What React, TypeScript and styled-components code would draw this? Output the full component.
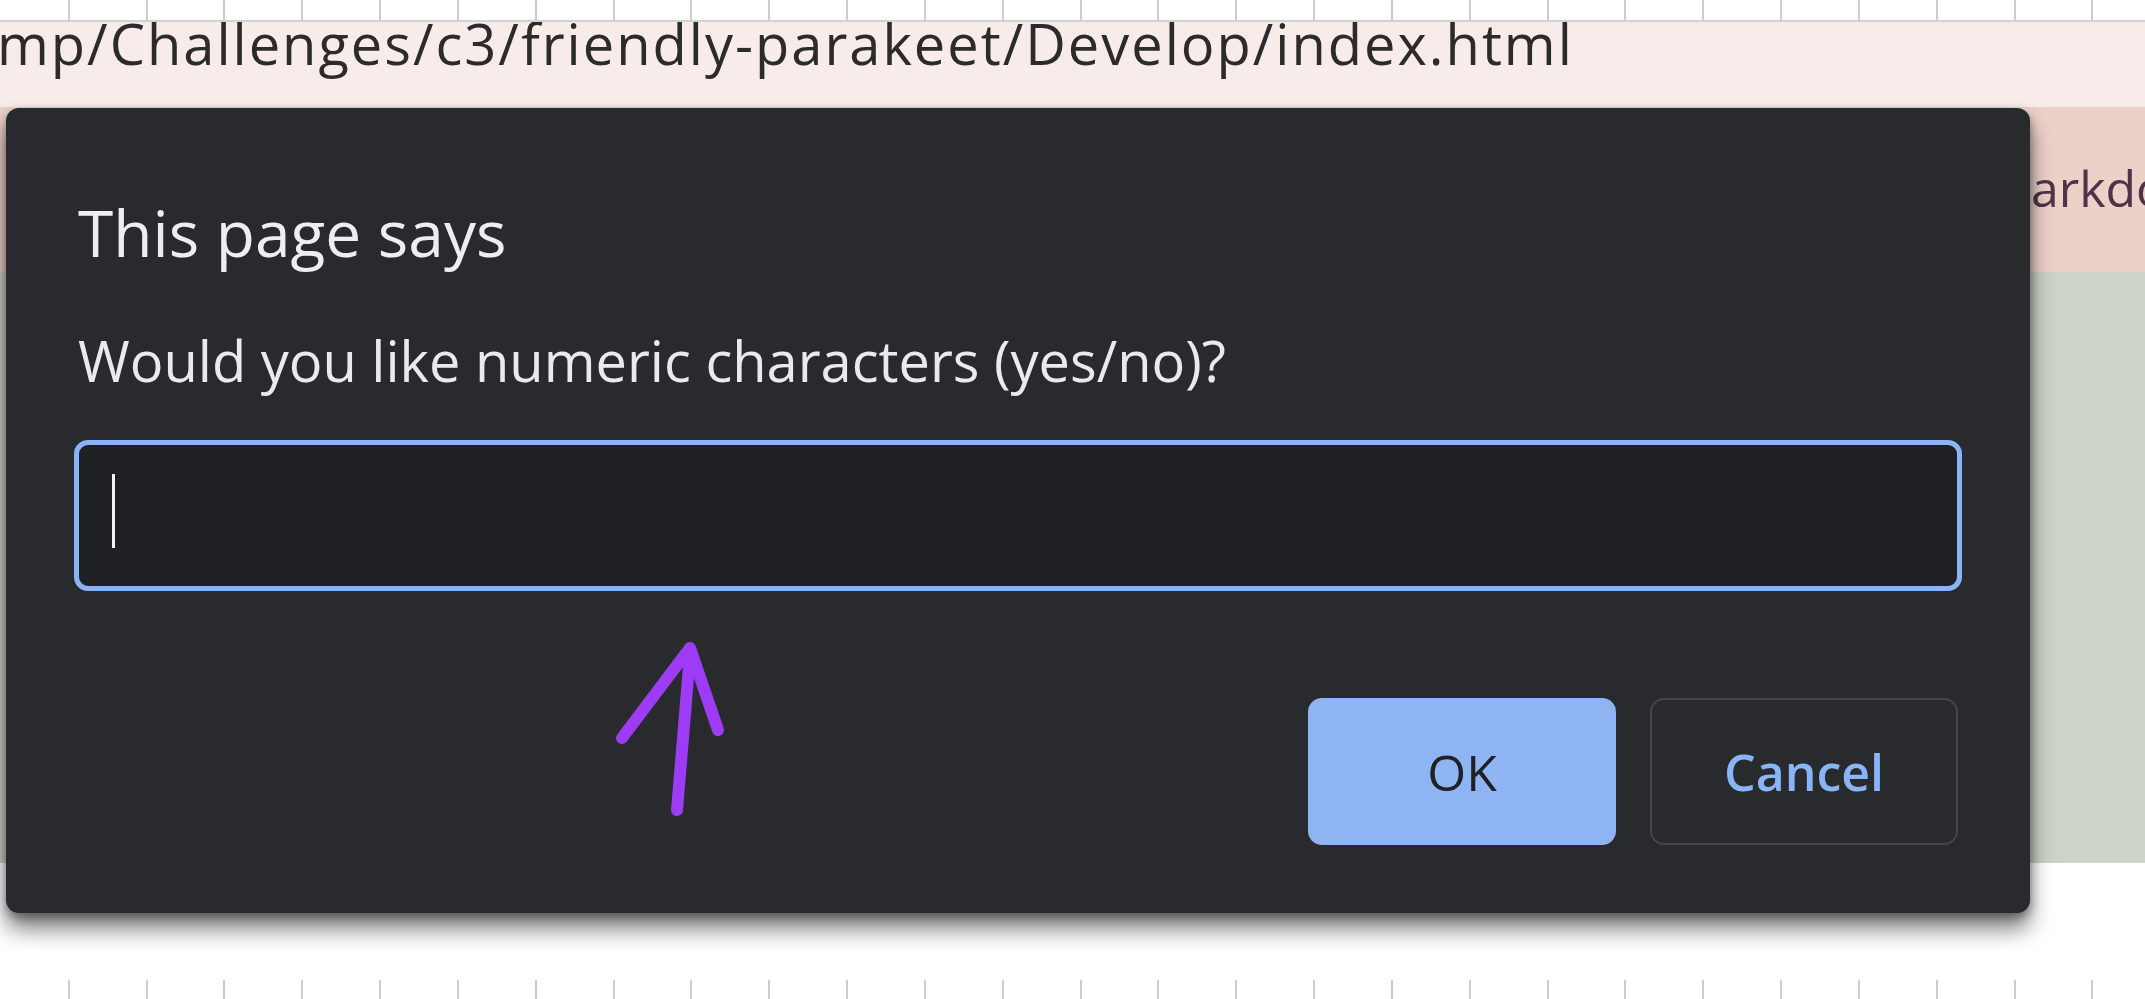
import React from "react";
import styled, { createGlobalStyle } from "styled-components";

const GlobalStyle = createGlobalStyle`
  html, body {
    margin: 0;
    padding: 0;
    width: 2145px;
    height: 999px;
    overflow: hidden;
    background: #ffffff;
  }
  #root {
    width: 2145px;
    height: 999px;
  }
`;

/* graph-paper tick marks: period 77.83px, first line at ~68px */
const TICKS = `repeating-linear-gradient(
  90deg,
  transparent 0px,
  transparent 67.8px,
  #cdcdcd 67.8px,
  #cdcdcd 69.8px,
  transparent 69.8px,
  transparent 77.83px
)`;

const Screen = styled.div`
  position: relative;
  width: 2145px;
  height: 999px;
  display: flex;
  flex-direction: column;
  overflow: hidden;
  font-family: "Open Sans", "Noto Sans", sans-serif;
`;

const Ruler = styled.div<{ $height: number; $line?: boolean }>`
  flex: 0 0 auto;
  height: ${(p) => p.$height}px;
  box-sizing: border-box;
  background: ${TICKS};
  border-bottom: ${(p) => (p.$line ? "2px solid #d2d2d2" : "none")};
`;

const AddressBar = styled.div`
  flex: 0 0 auto;
  height: 85px;
  background: #f8ecea;
  color: #2b2b2b;
  font-size: 56px;
  line-height: 42px;
  letter-spacing: 2px;
  white-space: nowrap;
  overflow: hidden;
  text-indent: -3px;
`;

const PageHeader = styled.header`
  flex: 0 0 auto;
  height: 165px;
  background: #ecd1c9;
  display: grid;
  grid-template-columns: 2031px auto;
  align-items: start;
  padding-top: 56px;
  box-sizing: border-box;
  overflow: hidden;
`;

const HeaderTitle = styled.div`
  font-size: 50px;
  line-height: 50px;
  color: #4b3346;
`;

const HeaderLink = styled.a`
  font-size: 50px;
  line-height: 50px;
  color: #4e3448;
  white-space: nowrap;
  text-decoration: none;
`;

const PageBody = styled.main`
  flex: 0 0 auto;
  height: 591px;
  background: #ccd3c7;
`;

const WhiteSpace = styled.div`
  flex: 1 1 auto;
  background: #ffffff;
`;

const Dialog = styled.div`
  position: absolute;
  left: 6px;
  top: 108px;
  width: 2024px;
  height: 805px;
  box-sizing: border-box;
  background: #292a2e;
  border-radius: 13px;
  box-shadow: 0 16px 22px rgba(0, 0, 0, 0.5), 0 4px 10px rgba(0, 0, 0, 0.35);
  padding: 93px 68px 68px 68px;
  display: flex;
  flex-direction: column;
  color: #e8eaed;
`;

const Title = styled.h1`
  margin: 0 0 0 4px;
  font-weight: 400;
  font-size: 64px;
  line-height: 64px;
  color: #eceef1;
`;

const Message = styled.p`
  margin: 67px 0 0 4px;
  font-size: 56px;
  line-height: 56px;
  color: #e8eaed;
`;

const PromptInput = styled.div`
  margin-top: 52px;
  height: 151px;
  box-sizing: border-box;
  border: 5px solid #8ab4f8;
  border-radius: 14px;
  background: #1f2023;
  display: flex;
  align-items: center;
  padding: 0 0 10px 33px;
`;

const Caret = styled.span`
  width: 3px;
  height: 74px;
  background: #f1f3f4;
`;

const ButtonRow = styled.div`
  margin-top: 107px;
  display: flex;
  justify-content: flex-end;
  gap: 34px;
  padding-right: 4px;
`;

const DialogButton = styled.button<{ $primary?: boolean }>`
  width: 308px;
  height: 147px;
  box-sizing: border-box;
  border-radius: 14px;
  font-family: "Open Sans", "Noto Sans", sans-serif;
  font-size: 50px;
  font-weight: ${(p) => (p.$primary ? 500 : 600)};
  padding: 0;
  cursor: pointer;
  background: ${(p) => (p.$primary ? "#8fb4f4" : "transparent")};
  color: ${(p) => (p.$primary ? "#202124" : "#8ab4f8")};
  border: ${(p) => (p.$primary ? "none" : "2px solid #44464a")};
`;

const Annotation = styled.svg`
  position: absolute;
  left: 600px;
  top: 630px;
  width: 140px;
  height: 200px;
  overflow: visible;
`;

export default function App() {
  return (
    <Screen>
      <GlobalStyle />
      <Ruler $height={22} $line />
      <AddressBar>mp/Challenges/c3/friendly-parakeet/Develop/index.html</AddressBar>
      <PageHeader>
        <HeaderTitle />
        <HeaderLink href="#">arkdown</HeaderLink>
      </PageHeader>
      <PageBody />
      <WhiteSpace />
      <Ruler $height={19} />

      <Dialog role="dialog">
        <Title>This page says</Title>
        <Message>Would you like numeric characters (yes/no)?</Message>
        <PromptInput>
          <Caret />
        </PromptInput>
        <ButtonRow>
          <DialogButton $primary>OK</DialogButton>
          <DialogButton>Cancel</DialogButton>
        </ButtonRow>
      </Dialog>

      <Annotation viewBox="0 0 140 200">
        <g
          fill="none"
          stroke="#9d3cf4"
          strokeWidth={12}
          strokeLinecap="round"
          strokeLinejoin="round"
        >
          <path d="M22 108 L90 18 L118 100" />
          <path d="M90 24 L77 180" />
        </g>
      </Annotation>
    </Screen>
  );
}
